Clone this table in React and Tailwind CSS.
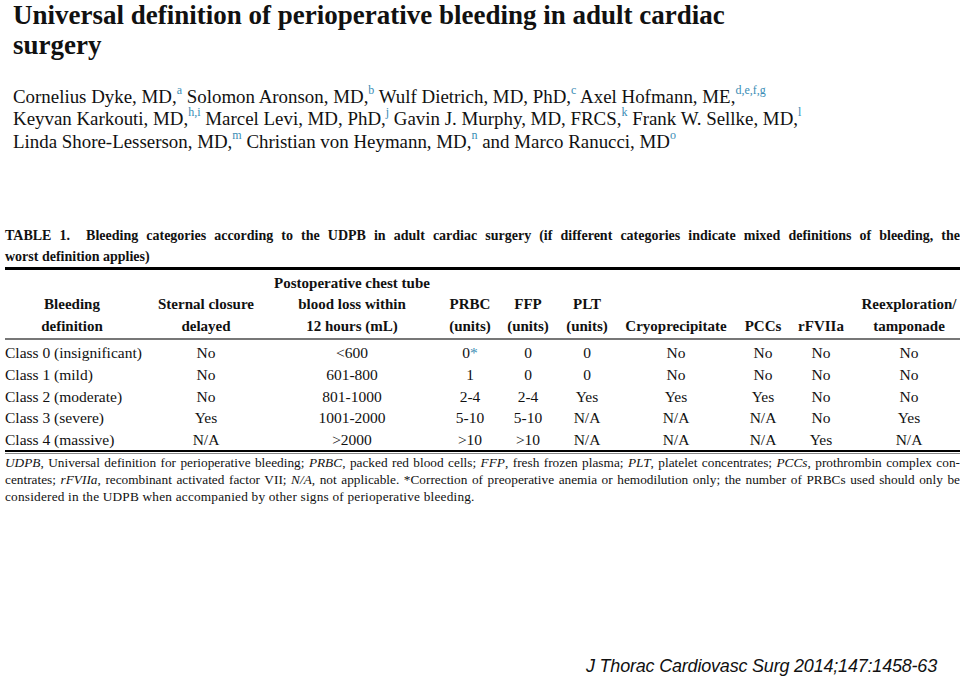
import React from 'react';

const ROWS = [
  ['Class 0 (insignificant)', 'No', '<600', '0*', '0', '0', 'No', 'No', 'No', 'No'],
  ['Class 1 (mild)', 'No', '601-800', '1', '0', '0', 'No', 'No', 'No', 'No'],
  ['Class 2 (moderate)', 'No', '801-1000', '2-4', '2-4', 'Yes', 'Yes', 'Yes', 'No', 'No'],
  ['Class 3 (severe)', 'Yes', '1001-2000', '5-10', '5-10', 'N/A', 'N/A', 'N/A', 'No', 'Yes'],
  ['Class 4 (massive)', 'N/A', '>2000', '>10', '>10', 'N/A', 'N/A', 'N/A', 'Yes', 'N/A'],
];

const HEADERS = [
  ['Bleeding', 'definition'],
  ['Sternal closure', 'delayed'],
  ['Postoperative chest tube', 'blood loss within', '12 hours (mL)'],
  ['PRBC', '(units)'],
  ['FFP', '(units)'],
  ['PLT', '(units)'],
  ['Cryoprecipitate'],
  ['PCCs'],
  ['rFVIIa'],
  ['Reexploration/', 'tamponade'],
];

const COLS = 'grid grid-cols-[134px_134px_158px_78px_38px_80px_98px_76px_40px_136px]';

function Sup({ children }) {
  return <sup className="text-[12px] top-[-0.75em] text-[#3a8db5] font-normal">{children}</sup>;
}

function Cell({ value, first }) {
  if (first) return <div className="whitespace-nowrap">{value}</div>;
  if (value === '0*') {
    return (
      <div className="flex justify-center whitespace-nowrap">
        0<span className="text-[#3a8db5]">*</span>
      </div>
    );
  }
  return <div className="flex justify-center whitespace-nowrap">{value}</div>;
}

export default function App() {
  return (
    <div className="w-[960px] h-[680px] overflow-hidden bg-white text-[#111] font-['Liberation_Serif',serif] flex flex-col">
      {/* Paper title */}
      <h1 className="pl-[13px] text-[27px] leading-[30px] font-bold">
        Universal definition of perioperative bleeding in adult cardiac
        <br />
        surgery
      </h1>

      {/* Authors */}
      <div className="pl-[13px] mt-[26px] text-[18.9px] leading-[22.3px] whitespace-nowrap">
        <div>
          Cornelius Dyke, MD,<Sup>a</Sup> Solomon Aronson, MD,<Sup>b</Sup> Wulf Dietrich, MD, PhD,<Sup>c</Sup> Axel
          Hofmann, ME,<Sup>d,e,f,g</Sup>
        </div>
        <div>
          Keyvan Karkouti, MD,<Sup>h,i</Sup> Marcel Levi, MD, PhD,<Sup>j</Sup> Gavin J. Murphy, MD, FRCS,<Sup>k</Sup>{' '}
          Frank W. Sellke, MD,<Sup>l</Sup>
        </div>
        <div>
          Linda Shore-Lesserson, MD,<Sup>m</Sup> Christian von Heymann, MD,<Sup>n</Sup> and Marco Ranucci, MD
          <Sup>o</Sup>
        </div>
      </div>

      {/* Table */}
      <div className="ml-[5px] w-[955px] mt-[72px]">
        <div className="text-[14px] leading-[21px] font-bold">
          <div className="text-justify [text-align-last:justify]">
            TABLE 1.&nbsp; Bleeding categories according to the UDPB in adult cardiac surgery (if different categories indicate mixed definitions of bleeding, the
          </div>
          <div>worst definition applies)</div>
        </div>

        <div className="h-[3px] bg-black" />

        <div className={`${COLS} pt-[3px] text-[15px] leading-[21.5px] font-bold`}>
          {HEADERS.map((lines, i) => (
            <div key={i} className="flex flex-col justify-end items-center whitespace-nowrap">
              {lines.map((l) => (
                <div key={l}>{l}</div>
              ))}
            </div>
          ))}
        </div>

        <div className="h-[2px] bg-[#777] mt-px" />

        <div className="pt-[2px] text-[15.5px] leading-[21.6px]">
          {ROWS.map((row) => (
            <div key={row[0]} className={COLS}>
              {row.map((v, j) => (
                <Cell key={j} value={v} first={j === 0} />
              ))}
            </div>
          ))}
        </div>

        <div className="h-[2px] bg-black" />
        <div className="h-px bg-[#888] mt-px" />

        {/* Footnote */}
        <div className="text-[13.3px] leading-[17px]">
          <div className="text-justify [text-align-last:justify]">
            <i>UDPB</i>, Universal definition for perioperative bleeding; <i>PRBC</i>, packed red blood cells;{' '}
            <i>FFP</i>, fresh frozen plasma; <i>PLT</i>, platelet concentrates; <i>PCCs</i>, prothrombin complex con-
          </div>
          <div className="text-justify [text-align-last:justify]">
            centrates; <i>rFVIIa</i>, recombinant activated factor VII; <i>N/A</i>, not applicable. *Correction of
            preoperative anemia or hemodilution only; the number of PRBCs used should only be
          </div>
          <div className="tracking-[0.2px]">
            considered in the UDPB when accompanied by other signs of perioperative bleeding.
          </div>
        </div>
      </div>

      {/* Citation */}
      <div className="mt-auto pr-[23px] pb-[2px] text-right font-['Liberation_Sans',sans-serif] italic text-[18px] leading-[24px] tracking-[-0.2px]">
        J Thorac Cardiovasc Surg 2014;147:1458-63
      </div>
    </div>
  );
}
